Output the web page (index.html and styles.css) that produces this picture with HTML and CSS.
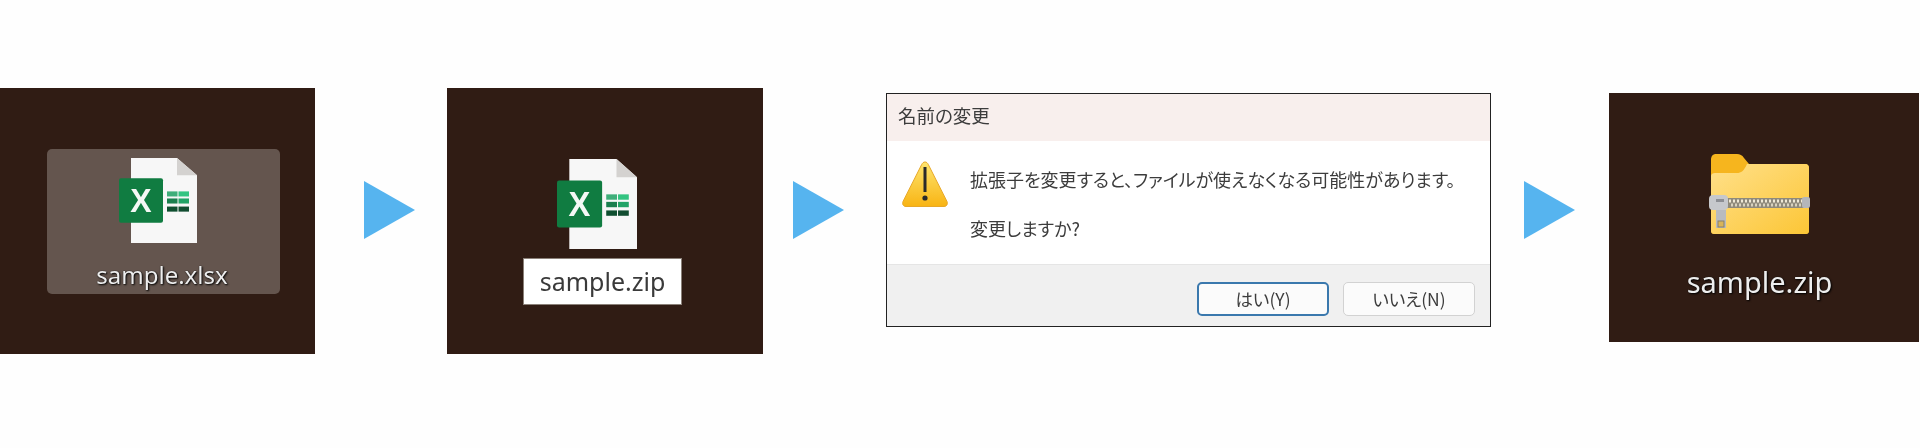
FILE: index.html
```html
<!DOCTYPE html>
<html lang="ja">
  <head>
    <meta charset="UTF-8" />
    <title>拡張子の変更</title>
    <link rel="stylesheet" href="styles.css">
  </head>
  <body>
    <svg class="defs" width="0" height="0">
      <symbol id="excel" viewBox="0 0 78 84" preserveAspectRatio="none">
        <path d="M12 0H58L78 17V84H12Z" fill="#f7f7f7" />
        <path d="M58 0V17H78Z" fill="#d4d2d0" />
        <rect x="48" y="33" width="10.5" height="5" fill="#3fae7a" />
        <rect x="59.5" y="33" width="10.5" height="5" fill="#33c481" />
        <rect x="48" y="40" width="10.5" height="5" fill="#1a7f4e" />
        <rect x="59.5" y="40" width="10.5" height="5" fill="#21a366" />
        <rect x="48" y="48" width="10.5" height="5" fill="#0f4f30" />
        <rect x="59.5" y="48" width="10.5" height="5" fill="#124d31" />
        <rect x="0" y="20" width="44" height="44" rx="2" fill="#107c41" />
        <text x="22" y="53.500" text-anchor="middle" class="excel-x">X</text>
      </symbol>
    </svg>

    <main class="steps">
      <!-- xlsx selected -->
      <section class="panel panel-a">
        <div class="selection">
          <svg class="icon-a"><use href="#excel" /></svg>
          <div class="file-label label-a">sample.xlsx</div>
        </div>
      </section>
      <div class="arrow arrow-a"></div>

      <!-- renaming -->
      <section class="panel panel-b">
        <svg class="icon-b"><use href="#excel" /></svg>
        <div class="rename-box">sample.zip</div>
      </section>
      <div class="arrow arrow-b"></div>

      <!-- confirm dialog -->
      <section class="dialog">
        <div class="dialog-title">名前の変更</div>
        <div class="dialog-body">
          <svg class="warn-icon" viewBox="0 0 46 46" width="46" height="46">
            <defs>
              <linearGradient id="warn" x1="0" y1="0" x2="0" y2="1">
                <stop offset="0" stop-color="#fee56f" />
                <stop offset="1" stop-color="#f8b414" />
              </linearGradient>
            </defs>
            <path d="M23 1C24.600 1 25.500 2 26.300 3.500L45 40.500C46 43 44.800 45.500 42 45.500H4C1.200 45.500 0 43 1 40.500L19.700 3.500C20.500 2 21.400 1 23 1Z" fill="url(#warn)" stroke="#e8a828" />
            <rect x="21.500" y="6" width="3" height="25" fill="#2a2a2a" />
            <circle cx="23" cy="37" r="2.600" fill="#2a2a2a" />
          </svg>
          <div class="dialog-text">
            <p>拡張子を変更すると、ファイルが使えなくなる可能性があります。</p>
            <p>変更しますか?</p>
          </div>
        </div>
        <div class="dialog-footer">
          <button class="btn btn-primary">はい(Y)</button>
          <button class="btn">いいえ(N)</button>
        </div>
      </section>
      <div class="arrow arrow-c"></div>

      <!-- result -->
      <section class="panel panel-d">
        <svg class="icon-d" viewBox="0 0 106 84" width="106" height="84">
          <defs>
            <linearGradient id="folder" x1="0" y1="0" x2="1" y2="1">
              <stop offset="0" stop-color="#ffe08a" />
              <stop offset="1" stop-color="#fcc636" />
            </linearGradient>
          </defs>
          <path d="M4 8C4 4 6 2 9 2H30C33 2 35 3 37 6L42 12H98C101 12 102 14 102 16V78C102 81 101 82 98 82H8C5 82 4 81 4 78Z" fill="#f6b51e" />
          <path d="M4 24C4 22 6 21 8 21H30C34 21 37 19 40 12H98C101 12 102 14 102 16V78C102 81 101 82 98 82H8C5 82 4 81 4 78Z" fill="url(#folder)" />
          <rect x="20" y="46" width="82" height="10" fill="#8f8a7c" />
          <line x1="22" y1="49" x2="96" y2="49" stroke="#efe9d6" stroke-width="3" stroke-dasharray="2 2" />
          <line x1="24" y1="53" x2="96" y2="53" stroke="#d9d3bf" stroke-width="3" stroke-dasharray="2 2" />
          <rect x="95" y="45" width="8" height="11" rx="2" fill="#b4b6ba" />
          <rect x="2" y="43" width="19" height="15" rx="4" fill="#c6c8cc" />
          <rect x="9" y="47" width="8" height="3" fill="#8d8f94" />
          <rect x="9" y="58" width="10" height="18" fill="#b9bbbf" />
          <rect x="11" y="69" width="6" height="6" fill="#d8b45a" stroke="#85806f" />
        </svg>
        <div class="file-label label-d">sample.zip</div>
      </section>
    </main>
  </body>
</html>
```

FILE: styles.css
```css
body {
  margin: 0;
  background: #fefefe;
  font-family: "Noto Sans", "Open Sans", sans-serif;
}
.defs {
  display: block;
  height: 0;
}
.steps {
  display: flex;
  align-items: flex-start;
  padding-top: 88px;
}

/* Desktop panels */
.panel {
  display: flex;
  flex-direction: column;
  align-items: center;
  flex: none;
  box-sizing: border-box;
  background: #301c14;
}
.panel-a {
  width: 315px;
  height: 266px;
  padding: 61px 35px 0 47px;
}
.panel-b {
  width: 316px;
  height: 266px;
  margin-left: 32px;
  padding-top: 71px;
}
.panel-d {
  width: 310px;
  height: 249px;
  margin-top: 5px;
  margin-left: 34px;
  padding-top: 59px;
}
.selection {
  display: flex;
  flex-direction: column;
  align-items: center;
  box-sizing: border-box;
  width: 233px;
  height: 145px;
  padding-top: 9px;
  background: #64554e;
  border-radius: 5px;
}
.icon-a {
  width: 78px;
  height: 85px;
  margin-right: 11px;
  filter: blur(0.5px);
}
.icon-b {
  width: 80px;
  height: 90px;
  margin-right: 16px;
  filter: blur(0.5px);
}
.icon-d {
  margin-right: 8px;
  filter: blur(0.6px);
}
.excel-x {
  font-family: "Liberation Sans", sans-serif;
  font-weight: bold;
  font-size: 32px;
  fill: #f4f8f5;
}
.file-label {
  color: #eeeeee;
  text-shadow: 1px 1px 2px #000, 0 0 1px #000;
  white-space: nowrap;
  filter: blur(0.4px);
}
.label-a {
  margin-top: 16px;
  margin-right: 3px;
  font-size: 24px;
  line-height: 32px;
}
.label-d {
  margin-top: 28px;
  margin-right: 9px;
  font-size: 29px;
  line-height: 36px;
}
.rename-box {
  box-sizing: border-box;
  width: 159px;
  height: 47px;
  margin-top: 9px;
  margin-right: 5px;
  background: #fff;
  border: 1px solid #8a8078;
  color: #3a3a3a;
  font-size: 25px;
  line-height: 45px;
  text-align: center;
  filter: blur(0.3px);
}

/* Arrows */
.arrow {
  flex: none;
  width: 51px;
  height: 58px;
  margin-top: 93px;
  background: #56b4ef;
  clip-path: polygon(0 0, 100% 50%, 0 100%);
}
.arrow-a {
  margin-left: 49px;
}
.arrow-b {
  margin-left: 30px;
}
.arrow-c {
  margin-left: 33px;
}

/* Rename dialog */
.dialog {
  display: flex;
  flex-direction: column;
  flex: none;
  box-sizing: border-box;
  width: 605px;
  height: 234px;
  margin-top: 5px;
  margin-left: 42px;
  background: #fff;
  border: 1px solid #222;
  color: #3c3c3c;
  font-family: "Noto Sans CJK JP", "Noto Sans", sans-serif;
  font-feature-settings: "palt";
  filter: blur(0.3px);
}
.dialog-title {
  height: 47px;
  padding-left: 11px;
  background: #f8efed;
  font-size: 18.500px;
  line-height: 42px;
}
.dialog-body {
  display: flex;
  align-items: flex-start;
  flex: 1;
  padding: 20px 0 0 15px;
}
.warn-icon {
  flex: none;
}
.dialog-text {
  margin-left: 22px;
  padding-top: 5px;
  font-size: 18px;
  line-height: 26px;
}
.dialog-text p {
  margin: 0 0 23px;
  white-space: nowrap;
}
.dialog-footer {
  display: flex;
  justify-content: flex-end;
  align-items: center;
  gap: 14px;
  box-sizing: border-box;
  height: 62px;
  padding: 7px 15px 0 0;
  background: #f0f0f0;
  border-top: 1px solid #e5e5e5;
}
.btn {
  box-sizing: border-box;
  width: 132px;
  height: 34px;
  padding: 0;
  background: #fbfbfb;
  border: 1px solid #d2d2d2;
  border-radius: 5px;
  color: #3c3c3c;
  font-family: inherit;
  font-feature-settings: inherit;
  font-size: 17.500px;
  line-height: 30px;
}
.btn-primary {
  border: 2px solid #3a78ad;
}
```
